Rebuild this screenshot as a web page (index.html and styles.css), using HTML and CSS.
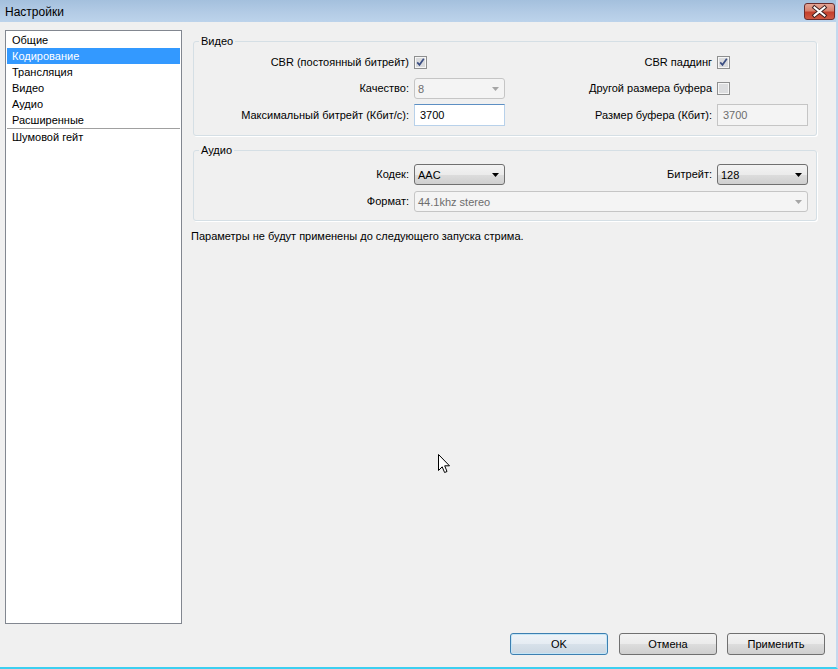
FILE: index.html
```html
<!DOCTYPE html>
<html lang="ru">
<head>
<meta charset="utf-8">
<title>Настройки</title>
<link rel="stylesheet" href="styles.css">
</head>
<body>
<div class="window">
  <div class="titlebar">
    <span class="title">Настройки</span>
    <span class="close">
      <svg width="31" height="17" viewBox="0 0 31 17"><path d="M10.5 4.5 L20.5 12.5 M20.5 4.5 L10.5 12.5" stroke="#3b1f1f" stroke-width="4" stroke-linecap="square"/><path d="M10.5 4.5 L20.5 12.5 M20.5 4.5 L10.5 12.5" stroke="#ffffff" stroke-width="2" stroke-linecap="square"/></svg>
    </span>
  </div>
  <div class="client">
    <div class="main">
      <ul class="list">
        <li>Общие</li>
        <li class="sel">Кодирование</li>
        <li>Трансляция</li>
        <li>Видео</li>
        <li>Аудио</li>
        <li>Расширенные</li>
        <li class="sep"></li>
        <li>Шумовой гейт</li>
      </ul>
      <div class="pane">
        <fieldset class="group group-video">
          <legend>Видео</legend>
          <div class="grid grid-video">
            <span class="lbl">CBR (постоянный битрейт)</span>
            <span class="cell"><svg class="chk" width="13" height="13" viewBox="0 0 13 13"><rect x="0.5" y="0.5" width="12" height="12" fill="#f6f6f6" stroke="#8e8f8f"/><rect x="2" y="2" width="9" height="9" fill="#dadbdd"/><path d="M3.2 6.3 L5.5 8.8 L9.8 2.8" fill="none" stroke="#3c4f83" stroke-width="1.7"/></svg></span>
            <span class="lbl">CBR паддинг</span>
            <span class="cell"><svg class="chk" width="13" height="13" viewBox="0 0 13 13"><rect x="0.5" y="0.5" width="12" height="12" fill="#f6f6f6" stroke="#8e8f8f"/><rect x="2" y="2" width="9" height="9" fill="#dadbdd"/><path d="M3.2 6.3 L5.5 8.8 L9.8 2.8" fill="none" stroke="#3c4f83" stroke-width="1.7"/></svg></span>

            <span class="lbl">Качество:</span>
            <span class="combo disabled"><span>8</span><svg width="7" height="4" viewBox="0 0 7 4"><path d="M0 0 H7 L3.5 4 Z" fill="#a6a6a6"/></svg></span>
            <span class="lbl">Другой размера буфера</span>
            <span class="cell"><svg class="chk" width="13" height="13" viewBox="0 0 13 13"><rect x="0.5" y="0.5" width="12" height="12" fill="#f6f6f6" stroke="#8e8f8f"/><rect x="2" y="2" width="9" height="9" fill="#dcdddf"/></svg></span>

            <span class="lbl">Максимальный битрейт (Кбит/с):</span>
            <span class="edit focus">3700</span>
            <span class="lbl">Размер буфера (Кбит):</span>
            <span class="edit disabled">3700</span>
          </div>
        </fieldset>

        <fieldset class="group group-audio">
          <legend>Аудио</legend>
          <div class="grid grid-audio">
            <span class="lbl">Кодек:</span>
            <span class="combo"><span>AAC</span><svg width="7" height="4" viewBox="0 0 7 4"><path d="M0 0 H7 L3.5 4 Z" fill="#000"/></svg></span>
            <span class="lbl">Битрейт:</span>
            <span class="combo"><span>128</span><svg width="7" height="4" viewBox="0 0 7 4"><path d="M0 0 H7 L3.5 4 Z" fill="#000"/></svg></span>

            <span class="lbl">Формат:</span>
            <span class="combo disabled wide"><span>44.1khz stereo</span><svg width="7" height="4" viewBox="0 0 7 4"><path d="M0 0 H7 L3.5 4 Z" fill="#a6a6a6"/></svg></span>
          </div>
        </fieldset>

        <p class="note">Параметры не будут применены до следующего запуска стрима.</p>
      </div>
    </div>
    <div class="buttons">
      <button class="btn default">OK</button>
      <button class="btn">Отмена</button>
      <button class="btn">Применить</button>
    </div>
  </div>
</div>
<svg class="cursor" width="13" height="20" viewBox="0 0 13 20"><path d="M0.5 0.5 L0.5 16.5 L4.2 12.8 L6.6 18.5 L9 17.5 L6.7 11.8 L11.5 11.8 Z" fill="#ffffff" stroke="#000000" stroke-width="1" stroke-linejoin="miter"/></svg>
</body>
</html>
```

FILE: styles.css
```css
html, body {
  margin: 0;
  padding: 0;
  background: #f0f0f0;
}

body {
  font-family: "Liberation Sans", Arial, sans-serif;
  font-size: 11px;
  color: #000;
  width: 838px;
  height: 669px;
  overflow: hidden;
  position: relative;
}

.window {
  width: 838px;
  height: 669px;
  box-sizing: border-box;
  display: flex;
  flex-direction: column;
  border-right: 2px solid #c4d9ee;
  border-bottom: 2px solid #3ccff0;
}

.titlebar {
  height: 22px;
  flex: none;
  display: flex;
  align-items: flex-start;
  justify-content: space-between;
  background: linear-gradient(#a4c0dd, #b4cce6 60%, #bcd3eb);
}

.title {
  font-size: 12px;
  line-height: 14px;
  margin: 5px 0 0 5px;
  color: #000;
}

.close {
  width: 31px;
  height: 17px;
  margin: 3px 1px 0 0;
  box-sizing: border-box;
  border: 1px solid #6a2d2d;
  border-radius: 3px;
  background: linear-gradient(#e4a595, #d8826e 45%, #c4402c 55%, #cf5a44);
  display: flex;
  align-items: center;
  justify-content: center;
  overflow: hidden;
}

.close svg {
  display: block;
  margin: -1px;
}

.client {
  flex: 1;
  display: flex;
  flex-direction: column;
  padding: 8px 0 12px 5px;
  background: #f0f0f0;
  min-height: 0;
}

.main {
  flex: 1;
  display: flex;
  min-height: 0;
}

.list {
  list-style: none;
  margin: 0;
  padding: 1px;
  width: 177px;
  box-sizing: border-box;
  border: 1px solid #828790;
  background: #fff;
  flex: none;
}

.list li {
  height: 16px;
  line-height: 16px;
  padding-left: 5px;
  white-space: nowrap;
}

.list li.sel {
  background: #3399ff;
  color: #fff;
}

.list li.sep {
  height: 1px;
  background: #a0a0a0;
  padding: 0;
}

.pane {
  margin: 5px 0 0 9px;
  display: flex;
  flex-direction: column;
  align-items: flex-start;
}

.group {
  margin: 0 0 0 2px;
  padding: 3px 8px 9px 0;
  width: 624px;
  box-sizing: border-box;
  border: 1px solid #d5dfe5;
  border-radius: 3px;
  box-shadow: 1px 1px 0 #ffffff;
  min-inline-size: 0;
}

.group legend {
  margin-left: 5px;
  padding: 0 2px;
  line-height: 13px;
  font-size: 11px;
}

.group-audio {
  margin-top: 8px;
  padding: 7px 8px 8px 0;
}

.grid {
  display: grid;
  grid-template-columns: 220px 91px 212px 91px;
}

.grid-video {
  grid-template-rows: 22px 21px 22px;
  row-gap: 5px;
}

.grid-audio {
  grid-template-rows: 21px 21px;
  row-gap: 6px;
}

.lbl {
  text-align: right;
  padding-right: 5px;
  align-self: center;
  white-space: nowrap;
  line-height: 13px;
}

.cell {
  display: flex;
  align-items: center;
}

.chk {
  display: block;
}

.combo {
  box-sizing: border-box;
  height: 21px;
  border: 1px solid #707070;
  border-radius: 3px;
  background: linear-gradient(#f3f3f3, #ebebeb 50%, #dddddd 50%, #cfcfcf);
  display: flex;
  align-items: center;
  justify-content: space-between;
  padding: 0 5px 0 3px;
}

.combo.disabled {
  background: #f4f4f4;
  border-color: #c5c5c5;
  color: #6d6d6d;
}

.combo.wide {
  grid-column: 2 / 5;
}

.combo svg {
  display: block;
}

.edit {
  box-sizing: border-box;
  height: 22px;
  border: 1px solid #abadb3;
  background: #fff;
  display: flex;
  align-items: center;
  padding-left: 5px;
}

.edit.focus {
  border-color: #5d8fc3 #b8d1ea #b8d1ea #b8d1ea;
  box-shadow: inset 0 0 0 0 #fff;
}

.edit.disabled {
  background: #f4f4f4;
  border-color: #c5c5c5;
  color: #6d6d6d;
}

.note {
  margin: 9px 0 0 0;
  line-height: 13px;
}

.buttons {
  flex: none;
  display: flex;
  justify-content: flex-end;
  gap: 10px;
  margin-top: 9px;
  padding-right: 11px;
}

.btn {
  width: 98px;
  height: 22px;
  box-sizing: border-box;
  border: 1px solid #707070;
  border-radius: 3px;
  background: linear-gradient(#f2f2f2, #ebebeb 50%, #dddddd 50%, #cfcfcf);
  font-family: "Liberation Sans", Arial, sans-serif;
  font-size: 11px;
  color: #000;
  padding: 0;
  margin: 0;
}

.btn.default {
  border-color: #3c7fb1;
  box-shadow: inset 0 0 0 1px #c4e5f6;
  background: linear-gradient(#eef3f8, #e5ecf3 50%, #d7e1ea 50%, #cbd7e2);
  margin-right: 1px;
}

.cursor {
  position: absolute;
  left: 438px;
  top: 454px;
  display: block;
}
```
